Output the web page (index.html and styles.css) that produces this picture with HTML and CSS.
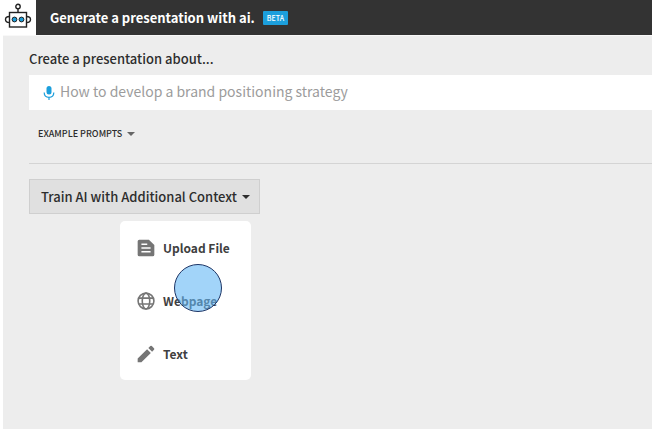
FILE: index.html
```html
<!DOCTYPE html>
<html lang="en">
<head>
    <meta charset="UTF-8">
    <meta name="viewport" content="width=device-width, initial-scale=1.0">
    <title>Generate a presentation with ai</title>
    <link rel="stylesheet" href="styles.css">
</head>
<body>
    <header class="topbar">
        <a class="logo" href="#" aria-label="Home">
            <svg width="28" height="26" viewBox="0 0 28 26" fill="none" stroke="#222" stroke-width="1.4">
                <circle cx="14" cy="3.5" r="2.2"/>
                <path d="M14 6v4"/>
                <rect x="5.5" y="9.5" width="17" height="14.5"/>
                <path d="M5.5 13.5C3 13.5 1.5 14.500 1.5 16.500S3 19.500 5.500 19.500M22.500 13.500C25 13.500 26.500 14.500 26.500 16.500S25 19.500 22.500 19.500"/>
                <circle cx="10.500" cy="16.500" r="2.400" fill="#1a9ad6" stroke-width="1"/>
                <circle cx="17.500" cy="16.500" r="2.400" fill="#1a9ad6" stroke-width="1"/>
            </svg>
        </a>
        <h1>Generate a presentation with ai.</h1>
        <span class="badge">BETA</span>
    </header>

    <main class="content">
        <label class="prompt-label" for="prompt">Create a presentation about...</label>
        <div class="prompt-box">
            <svg width="12" height="16" viewBox="0 0 12 16">
                <rect x="3.500" y="1" width="5" height="8.500" rx="2.500" fill="#1c9fdc"/>
                <path d="M1.200 7.500c0 3 2 4.800 4.800 4.800s4.800-1.800 4.800-4.800M6 12v3" fill="none" stroke="#1c9fdc" stroke-width="1.200"/>
            </svg>
            <input type="text" id="prompt" placeholder="How to develop a brand positioning strategy">
        </div>
        <button type="button" class="examples">EXAMPLE PROMPTS <span class="caret"></span></button>

        <hr>

        <div class="dropdown">
            <button type="button" class="train" aria-expanded="true">Train AI with Additional Context <span class="caret"></span></button>
            <div class="menu">
                <button type="button">
                    <svg width="20" height="20" viewBox="0 0 24 24"><path fill="#757575" fill-rule="evenodd" d="M15.500 2H4a2 2 0 0 0-2 2v16a2 2 0 0 0 2 2h16a2 2 0 0 0 2-2V8.500zM6.500 6.500h7v2h-7zm11 11h-11v-2h11zm0-4.500h-11v-2h11z"/></svg>
                    Upload File
                </button>
                <button type="button">
                    <svg width="20" height="20" viewBox="0 0 24 24" fill="none" stroke="#757575" stroke-width="1.900">
                        <circle cx="12" cy="12" r="9.500"/>
                        <ellipse cx="12" cy="12" rx="4.500" ry="9.500"/>
                        <path d="M3.500 8.500h17M3.500 15.500h17"/>
                    </svg>
                    Webpage
                </button>
                <button type="button">
                    <svg width="20" height="20" viewBox="0 0 24 24"><path fill="#757575" d="M2 17.500V22h4.500L17.800 10.700l-4.500-4.500zM21.600 6.800a1.300 1.300 0 0 0 0-1.800l-2.600-2.600a1.300 1.300 0 0 0-1.800 0L14.800 4.700l4.500 4.500z"/></svg>
                    Text
                </button>
                <span class="pointer"></span>
            </div>
        </div>
    </main>
</body>
</html>
```
FILE: styles.css
```css
* {
    box-sizing: border-box;
}

body {
    margin: 0;
    padding-left: 3px;
    background: #fff;
    color: #2d2d2d;
    font-family: "Noto Sans CJK SC", "Open Sans", sans-serif;
    font-weight: 500;
    min-height: 100vh;
    display: flex;
    flex-direction: column;
}

button {
    font: inherit;
    color: inherit;
    border: none;
    background: none;
    padding: 0;
    cursor: pointer;
}

/* Top bar */
.topbar {
    display: flex;
    align-items: center;
    height: 36px;
    background: #333;
    border-bottom: 1px solid #f8f8f8;
}

.logo {
    display: flex;
    justify-content: center;
    width: 33px;
    height: 35px;
    padding-top: 3px;
    padding-right: 3px;
    background: #fff;
}

.topbar h1 {
    margin: 0 8px 0 14px;
    color: #fff;
    font-size: 13px;
    font-weight: 700;
    line-height: 20px;
}

.badge {
    padding: 0 4px;
    border-radius: 1px;
    background: #1c9fdc;
    color: #fff;
    font-size: 7px;
    line-height: 14px;
}

/* Page content */
.content {
    flex: 1;
    padding: 12px 0 20px 26px;
    background: #ededed;
}

.prompt-label {
    display: block;
    margin-bottom: 5px;
    font-size: 13px;
    line-height: 22px;
}

.prompt-box {
    display: flex;
    align-items: center;
    gap: 5px;
    height: 35px;
    padding-left: 14px;
    background: #fff;
}

.prompt-box input {
    flex: 1;
    min-width: 0;
    padding: 0 0 4px;
    border: none;
    outline: none;
    background: none;
    font: inherit;
    font-weight: 400;
    font-size: 14px;
}

.prompt-box input::placeholder {
    color: #9c9c9c;
}

.examples {
    display: flex;
    align-items: center;
    gap: 5px;
    margin: 14px 0 0 9px;
    font-size: 9px;
    line-height: 20px;
}

.caret {
    border: 4px solid transparent;
    border-top-color: currentColor;
    border-bottom: none;
}

.examples .caret {
    color: #666;
}

hr {
    margin: 19px 0 15px;
    border: none;
    border-top: 1px solid #d4d4d4;
}

/* Context dropdown */
.dropdown {
    position: relative;
    width: max-content;
}

.train {
    display: flex;
    align-items: center;
    gap: 5px;
    height: 35px;
    padding: 0 9px 0 11px;
    border: 1px solid #cfcfcf;
    background: #e0e0e0;
    font-size: 13px;
    line-height: 32px;
}

.menu {
    position: absolute;
    top: 42px;
    left: 91px;
    display: flex;
    flex-direction: column;
    width: 131px;
    border-radius: 5px;
    background: #fff;
    color: #404040;
}

.menu button {
    display: flex;
    align-items: center;
    gap: 7px;
    height: 53px;
    padding-left: 16px;
    font-size: 12px;
    font-weight: 700;
}

.pointer {
    position: absolute;
    top: 43px;
    left: 54px;
    width: 48px;
    height: 48px;
    border: 1px solid #1d3566;
    border-radius: 50%;
    background: rgba(100, 184, 245, 0.6);
    pointer-events: none;
}
```
